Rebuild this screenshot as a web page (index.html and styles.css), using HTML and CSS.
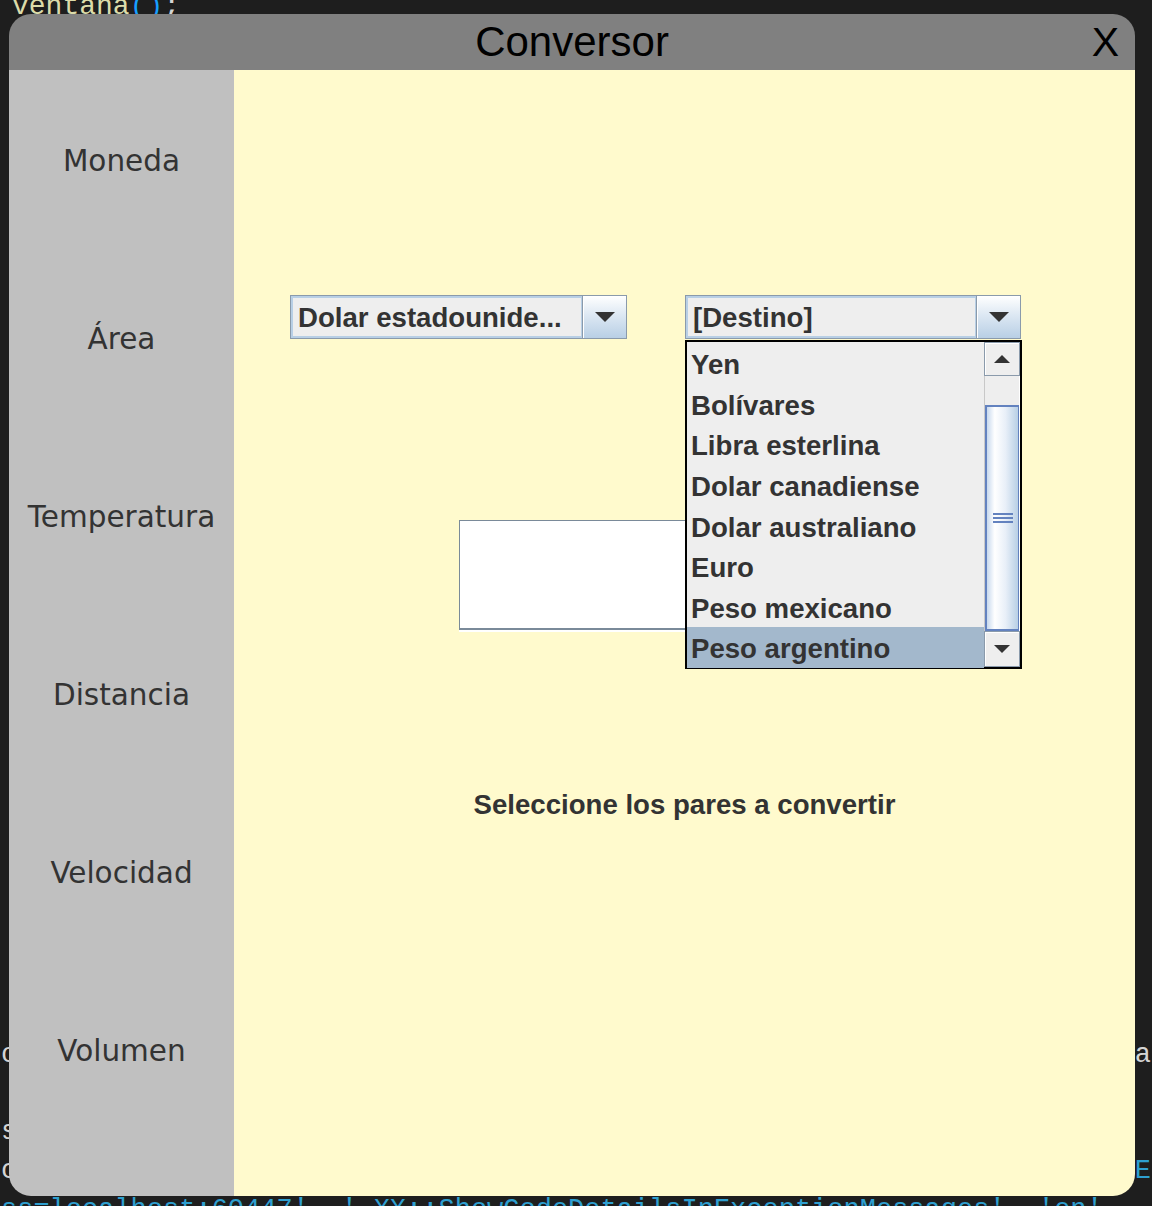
FILE: index.html
```html
<!DOCTYPE html>
<html lang="es">
<head>
<meta charset="utf-8">
<title>Conversor</title>
<link rel="stylesheet" href="styles.css">
</head>
<body>
<div class="desk">
  <div class="code">
    <div class="ln first"><span class="fn">ventana</span><span class="br">()</span><span class="pl">;</span></div>
    <div class="ln far"><span class="pl edge-l">o</span><span class="pl edge-r">a</span></div>
    <div class="ln skip"><span class="pl edge-l">s</span></div>
    <div class="ln"><span class="pl edge-l">c</span><span class="str edge-r">E</span></div>
    <div class="ln"><span class="str edge-l">ss=localhost:60447', ' XX::ShowCodeDetailsInExceptionMessages', 'en'</span></div>
  </div>

  <div class="win">
    <div class="titlebar">
      <span class="title">Conversor</span>
      <span class="close">X</span>
    </div>
    <div class="winbody">
      <nav class="side">
        <div class="side-item">Moneda</div>
        <div class="side-item">Área</div>
        <div class="side-item">Temperatura</div>
        <div class="side-item">Distancia</div>
        <div class="side-item">Velocidad</div>
        <div class="side-item">Volumen</div>
      </nav>
      <main class="main">
        <div class="combos">
          <div class="combo combo-from">
            <div class="combo-text">Dolar estadounide...</div>
            <div class="combo-btn"><svg width="20" height="10" viewBox="0 0 20 10"><path d="M0 0 H20 L10 10 Z" fill="#333"/></svg></div>
          </div>
          <div class="combo combo-to">
            <div class="combo-text">[Destino]</div>
            <div class="combo-btn"><svg width="20" height="10" viewBox="0 0 20 10"><path d="M0 0 H20 L10 10 Z" fill="#333"/></svg></div>
          </div>
        </div>
        <div class="field"></div>
        <p class="hint">Seleccione los pares a convertir</p>

        <div class="popup">
          <ul class="list">
            <li class="item">Yen</li>
            <li class="item">Bolívares</li>
            <li class="item">Libra esterlina</li>
            <li class="item">Dolar canadiense</li>
            <li class="item">Dolar australiano</li>
            <li class="item">Euro</li>
            <li class="item">Peso mexicano</li>
            <li class="item selected">Peso argentino</li>
          </ul>
          <div class="scrollbar">
            <div class="sb-btn"><svg width="16" height="8" viewBox="0 0 16 8"><path d="M0 8 H16 L8 0 Z" fill="#333"/></svg></div>
            <div class="sb-track">
              <div class="sb-thumb">
                <svg width="20" height="10" viewBox="0 0 20 10">
                  <rect x="0" y="0" width="20" height="2" fill="#6382bf"/>
                  <rect x="0" y="4" width="20" height="2" fill="#6382bf"/>
                  <rect x="0" y="8" width="20" height="2" fill="#6382bf"/>
                </svg>
              </div>
            </div>
            <div class="sb-btn"><svg width="16" height="8" viewBox="0 0 16 8"><path d="M0 0 H16 L8 8 Z" fill="#333"/></svg></div>
          </div>
        </div>
      </main>
    </div>
  </div>
</div>
</body>
</html>
```

FILE: styles.css
```css
* { box-sizing: border-box; }

html, body {
  margin: 0;
  padding: 0;
  background: #1e1e1e;
}

.desk {
  position: relative;
  width: 1152px;
  height: 1206px;
  overflow: hidden;
  background: #1e1e1e;
}

/* background editor text */
.code {
  margin-top: -14.6px;
  font-family: "Liberation Mono", "DejaVu Sans Mono", monospace;
  font-size: 27px;
  color: #d4d4d4;
}
.ln {
  height: 38.9px;
  line-height: 38.9px;
  white-space: pre;
  display: flex;
  padding-left: 12px;
}
.ln.first {
  font-size: 28px;
  margin-top: 3px;
  margin-bottom: -3px;
}
.ln.far { margin-top: calc(38.9px * 26); }
.ln.skip { margin-top: 38.9px; }
.edge-l { margin-left: -11px; }
.edge-r { margin-left: auto; padding-right: 1px; }
.fn { color: #dcdcaa; }
.br { color: #179fff; }
.pl { color: #d4d4d4; }
.str { color: #2e9fd0; }

/* window */
.win {
  position: absolute;
  left: 9px;
  top: 14px;
  width: 1126px;
  height: 1182px;
  border-radius: 22px;
  overflow: hidden;
  display: flex;
  flex-direction: column;
}

.titlebar {
  height: 56px;
  background: #808080;
  position: relative;
  display: flex;
  align-items: center;
  justify-content: center;
  font-family: "Liberation Sans", Arial, sans-serif;
  color: #000;
}
.title {
  font-size: 42px;
  line-height: 56px;
}
.close {
  position: absolute;
  right: 16px;
  top: 0;
  font-size: 41px;
  line-height: 56px;
}

.winbody {
  flex: 1;
  display: flex;
}

.side {
  width: 225px;
  background: #c0c0c0;
  padding-top: 2px;
  display: grid;
  grid-template-rows: repeat(6, 178px);
  align-content: start;
}
.side-item {
  display: flex;
  align-items: center;
  justify-content: center;
  font-family: "Comic Sans MS", "DejaVu Sans", sans-serif;
  font-size: 29.5px;
  color: #333;
}

.main {
  flex: 1;
  background: #fffacd;
  position: relative;
  padding-top: 225px;
  font-family: "Liberation Sans", Arial, sans-serif;
  color: #333;
}

.combos {
  display: flex;
  gap: 58px;
  margin-left: 56px;
}

.combo {
  height: 44px;
  display: flex;
  border: 1px solid #8a9aab;
  background: #eeeeee;
}
.combo-from { width: 337px; }
.combo-to { width: 336px; }

.combo-text {
  flex: 1;
  border: 2px solid #b8cfe5;
  border-right-width: 1px;
  padding-left: 5px;
  font-weight: bold;
  font-size: 27.6px;
  line-height: 40px;
  white-space: nowrap;
  overflow: hidden;
}
.combo-btn {
  width: 44px;
  border-left: 1px solid #8a9aab;
  background: linear-gradient(to bottom, #ffffff 0%, #dde8f3 45%, #b8cfe5 100%);
  box-shadow: inset 1px 1px 0 #ffffff;
  display: flex;
  align-items: center;
  justify-content: center;
}

.field {
  margin-left: 225px;
  margin-top: 181px;
  width: 250px;
  height: 110px;
  background: #ffffff;
  border-top: 1px solid #7a8a99;
  border-left: 1px solid #7a8a99;
  border-bottom: 2px solid #7a8a99;
  box-shadow: 0 2px 0 #ffffff;
}

.hint {
  margin: 160px 0 0 0;
  text-align: center;
  font-weight: bold;
  font-size: 27.6px;
  line-height: 30px;
}

/* dropdown popup */
.popup {
  position: absolute;
  left: 451px;
  top: 270px;
  width: 337px;
  height: 329px;
  border: 2px solid #000;
  background: #eeeeee;
  display: flex;
}
.list {
  flex: 1;
  margin: 0;
  padding: 0;
  list-style: none;
}
.item {
  height: 40.7px;
  line-height: 45px;
  padding-left: 4px;
  font-weight: bold;
  font-size: 27.6px;
  color: #333;
  white-space: nowrap;
}
.item.selected { background: #a3b8cc; line-height: 44px; }

.scrollbar {
  width: 36px;
  display: flex;
  flex-direction: column;
  background: #eeeeee;
}
.sb-btn {
  height: 34px;
  border: 1px solid #8a9aab;
  box-shadow: inset 1px 1px 0 #ffffff;
  background: #eeeeee;
  display: flex;
  align-items: center;
  justify-content: center;
}
.sb-btn:last-child { height: 36px; }
.sb-track {
  flex: 1;
  border-left: 1px solid #c8c8c8;
  border-right: 1px solid #ffffff;
  padding-top: 29px;
}
.sb-thumb {
  height: 226px;
  border: 2px solid #6382bf;
  border-right-width: 1px;
  background: linear-gradient(to right, #c8d9ee 0%, #ffffff 25%, #e8eff8 60%, #b8cfe5 100%);
  display: flex;
  align-items: center;
  justify-content: center;
}
```
